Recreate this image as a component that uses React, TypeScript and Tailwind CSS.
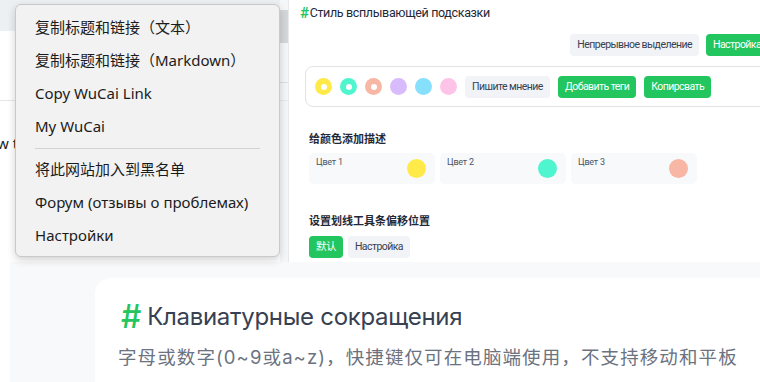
import React from "react";

const menuFont = { fontFamily: '"Noto Sans", "Noto Sans CJK SC", sans-serif' };

type Swatch = { color: string; ring?: boolean };

const swatches: Swatch[] = [
  { color: "bg-[#ffea4a]", ring: true },
  { color: "bg-[#4ff5cf]", ring: true },
  { color: "bg-[#f8b6a5]", ring: true },
  { color: "bg-[#d8bbfc]" },
  { color: "bg-[#86e0fc]" },
  { color: "bg-[#fec4e8]" },
];

const colorCards = [
  { label: "Цвет 1", color: "bg-[#ffea4a]" },
  { label: "Цвет 2", color: "bg-[#4ff5cf]" },
  { label: "Цвет 3", color: "bg-[#f8b6a5]" },
];

const greenBtn = "flex h-[22px] items-center rounded-[4px] bg-[#22c55e] px-[7px] text-white";
const grayBtn = "flex h-[22px] items-center rounded-[4px] bg-[#f1f3f7] px-[7px] text-[#374151]";

const MenuItem = ({ children }: { children: React.ReactNode }) => (
  <div className="flex h-[33px] items-center pl-[19px] text-[15px] text-[#1b1b1b]">{children}</div>
);

const ContextMenu = () => (
  <div
    className="absolute left-[15px] top-[4px] w-[265px] rounded-[6px] border border-[#c9c9c9] bg-[#f2f2f2] pt-[6px] pb-[4px] shadow-[0_3px_8px_rgba(0,0,0,0.18)]"
    style={menuFont}
  >
    <MenuItem>复制标题和链接（文本）</MenuItem>
    <MenuItem>复制标题和链接（Markdown）</MenuItem>
    <MenuItem>Copy WuCai Link</MenuItem>
    <MenuItem>My WuCai</MenuItem>
    <div className="flex h-[10px] items-center px-[19px]">
      <div className="h-px w-full bg-[#d2d2d2]" />
    </div>
    <MenuItem>将此网站加入到黑名单</MenuItem>
    <MenuItem>Форум (отзывы о проблемах)</MenuItem>
    <MenuItem>Настройки</MenuItem>
  </div>
);

const LeftPanel = () => (
  <div className="flex w-[289px] shrink-0 border-r border-[#e6e8eb] bg-white">
    <div className="flex flex-1 flex-col">
      <div className="h-[31px] bg-[#edf0f3]" />
      <div className="h-[69px]" />
      <div className="h-px bg-[#e5e7eb]" />
      <div className="mt-[31px] flex items-center justify-between pr-[2px] text-[15px] text-[#222]" style={menuFont}>
        <span className="-ml-[3px]">w t</span>
        <span className="flex items-center">
          e<span className="ml-[2px] inline-block h-[16px] w-[2px] bg-[#f59e0b]" />
        </span>
      </div>
    </div>
    <div className="flex w-[8px] flex-col bg-[#f5f6f7]">
      <div className="mt-[10px] h-[33px] bg-[#d4d6d9]" />
      <div className="mt-[39px] h-px bg-[#dcdfe3]" />
      <div className="mt-[17px] h-px bg-[#e6e8eb]" />
    </div>
  </div>
);

const RightPanel = () => (
  <div className="flex-1 overflow-hidden bg-white" style={{ fontFamily: "Roboto, 'Noto Sans CJK SC', sans-serif" }}>
    <div className="w-[490px] pr-[5px]">
      <div className="ml-[11px] mt-[4px] flex h-[18px] items-center text-[12.5px] tracking-[-0.35px] text-[#1f2937]">
        <span className="mr-[1px] text-[15px] font-semibold text-[#22c55e]">#</span>
        Стиль всплывающей подсказки
      </div>
      <div className="mt-[12px] flex justify-end gap-[7px] text-[10.5px] tracking-[-0.55px]">
        <div className={grayBtn}>Непрерывное выделение</div>
        <div className={`${greenBtn} w-[68px]`}>Настройка</div>
      </div>
      <div className="ml-[16px] mt-[10px] flex h-[41px] items-center gap-[8px] rounded-[8px] border border-[#e1e3e6] pl-[9px] text-[10.5px] tracking-[-0.55px]">
        {swatches.map((s, i) => (
          <div key={i} className={`flex h-[17px] w-[17px] items-center justify-center rounded-full ${s.color}`}>
            {s.ring ? <div className="h-[6px] w-[6px] rounded-full bg-white" /> : null}
          </div>
        ))}
        <div className={grayBtn}>Пишите мнение</div>
        <div className={greenBtn}>Добавить теги</div>
        <div className={greenBtn}>Копирсвать</div>
      </div>
      <div className="ml-[20px] mt-[25px] text-[11px] font-bold text-[#1f2937]">给颜色添加描述</div>
      <div className="ml-[20px] mt-[4px] flex gap-[5px]">
        {colorCards.map((c) => (
          <div key={c.label} className="flex h-[31px] w-[126px] justify-between rounded-[5px] bg-[#f8f9fb] pl-[7px] pr-[9px]">
            <span className="mt-[3px] text-[9px] tracking-[-0.2px] text-[#4b5563]">{c.label}</span>
            <div className={`mt-[6px] h-[19px] w-[19px] rounded-full ${c.color}`} />
          </div>
        ))}
      </div>
      <div className="ml-[20px] mt-[30px] text-[11px] font-bold text-[#1f2937]">设置划线工具条偏移位置</div>
      <div className="ml-[20px] mt-[6px] flex gap-[5px] text-[10.5px] tracking-[-0.55px]">
        <div className={greenBtn}>默认</div>
        <div className={grayBtn}>Настройка</div>
      </div>
    </div>
  </div>
);

const ShortcutCard = () => (
  <div className="flex flex-1 bg-white">
    <div className="ml-[10px] flex-1 bg-[#f8f9fa] pl-[85px] pt-[16px]">
      <div className="h-full rounded-tl-[16px] bg-white pl-[23px] pt-[21px]" style={{ fontFamily: "Inter, 'Noto Sans CJK SC', sans-serif" }}>
        <div className="flex items-center text-[24px] tracking-[-0.3px] text-[#374151]">
          <span className="ml-[3px] mr-[6px] text-[32px] font-medium leading-none text-[#22c55e]">#</span>
          Клавиатурные сокращения
        </div>
        <div className="mt-[9px] text-[18.5px] tracking-[1.1px] text-[#6b7280]">
          字母或数字(0~9或a~z)，快捷键仅可在电脑端使用，不支持移动和平板
        </div>
      </div>
    </div>
  </div>
);

export default function App() {
  return (
    <div className="relative flex h-[382px] w-[760px] flex-col overflow-hidden bg-white">
      <div className="flex h-[262px] shrink-0">
        <LeftPanel />
        <RightPanel />
      </div>
      <ShortcutCard />
      <ContextMenu />
    </div>
  );
}
